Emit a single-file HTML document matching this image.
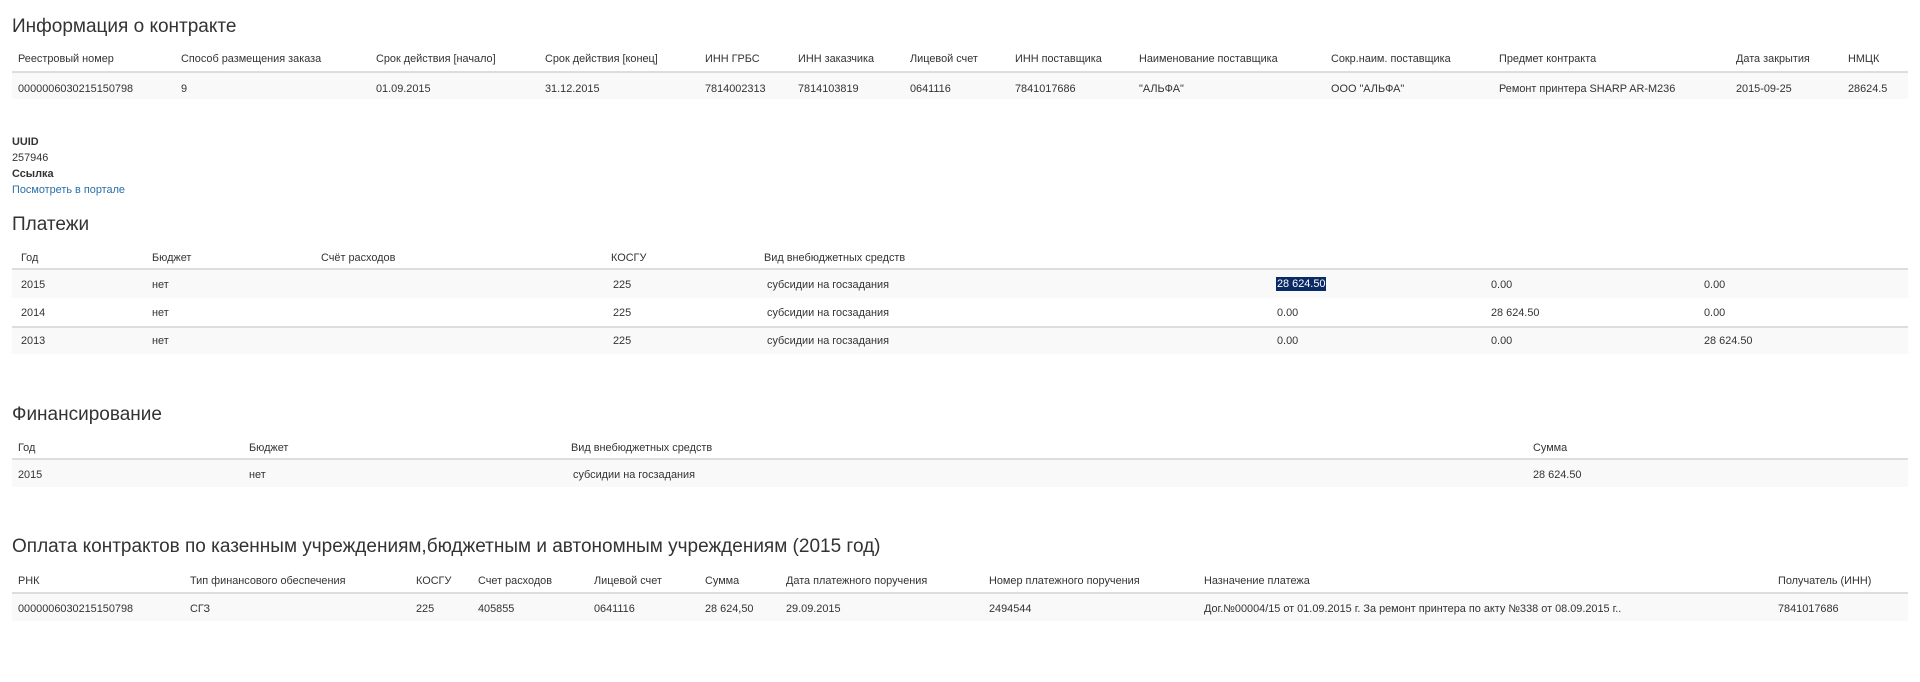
<!DOCTYPE html>
<html><head><meta charset="utf-8"><style>
body{margin:0;width:1920px;height:682px;background:#fff;font-family:"Liberation Sans",sans-serif;color:#333;font-size:10.9px;position:relative;overflow:hidden}
.a{position:absolute;white-space:nowrap;margin-top:2px}
h2{position:absolute;margin:0;font-weight:normal;font-size:19px;left:12px;color:#333;white-space:nowrap;margin-top:2px}
.bg{position:absolute;left:12px;width:1896px;background:#f9f9f9}
.ln{position:absolute;left:12px;width:1896px;height:2px;background:#ddd}
.sel{background:#0a2a66;color:#fff;padding:1px 1px}
b{font-weight:bold}
a{color:#2a6fa8;text-decoration:none}
</style></head><body>
<h2 style="top:14px">Информация о контракте</h2>
<div class="ln" style="top:71px"></div>
<div class="bg" style="top:73px;height:26px"></div>
<div class="a" style="top:51px;left:18px">Реестровый номер</div>
<div class="a" style="top:51px;left:181px">Способ размещения заказа</div>
<div class="a" style="top:51px;left:376px">Срок действия [начало]</div>
<div class="a" style="top:51px;left:545px">Срок действия [конец]</div>
<div class="a" style="top:51px;left:705px">ИНН ГРБС</div>
<div class="a" style="top:51px;left:798px">ИНН заказчика</div>
<div class="a" style="top:51px;left:910px">Лицевой счет</div>
<div class="a" style="top:51px;left:1015px">ИНН поставщика</div>
<div class="a" style="top:51px;left:1139px">Наименование поставщика</div>
<div class="a" style="top:51px;left:1331px">Сокр.наим. поставщика</div>
<div class="a" style="top:51px;left:1499px">Предмет контракта</div>
<div class="a" style="top:51px;left:1736px">Дата закрытия</div>
<div class="a" style="top:51px;left:1848px">НМЦК</div>
<div class="a" style="top:81px;left:18px">0000006030215150798</div>
<div class="a" style="top:81px;left:181px">9</div>
<div class="a" style="top:81px;left:376px">01.09.2015</div>
<div class="a" style="top:81px;left:545px">31.12.2015</div>
<div class="a" style="top:81px;left:705px">7814002313</div>
<div class="a" style="top:81px;left:798px">7814103819</div>
<div class="a" style="top:81px;left:910px">0641116</div>
<div class="a" style="top:81px;left:1015px">7841017686</div>
<div class="a" style="top:81px;left:1139px">"АЛЬФА"</div>
<div class="a" style="top:81px;left:1331px">ООО "АЛЬФА"</div>
<div class="a" style="top:81px;left:1499px">Ремонт принтера SHARP AR-M236</div>
<div class="a" style="top:81px;left:1736px">2015-09-25</div>
<div class="a" style="top:81px;left:1848px">28624.5</div>

<div class="a" style="top:134px;left:12px"><b>UUID</b></div>
<div class="a" style="top:150px;left:12px">257946</div>
<div class="a" style="top:166px;left:12px"><b>Ссылка</b></div>
<div class="a" style="top:182px;left:12px"><a>Посмотреть в портале</a></div>

<h2 style="top:212px">Платежи</h2>
<div class="ln" style="top:268px"></div>
<div class="bg" style="top:270px;height:28px"></div>
<div class="ln" style="top:326px"></div>
<div class="bg" style="top:328px;height:26px"></div>
<div class="a" style="top:250px;left:21px">Год</div>
<div class="a" style="top:250px;left:152px">Бюджет</div>
<div class="a" style="top:250px;left:321px">Счёт расходов</div>
<div class="a" style="top:250px;left:611px">КОСГУ</div>
<div class="a" style="top:250px;left:764px">Вид внебюджетных средств</div>
<div class="a" style="top:277px;left:21px">2015</div><div class="a" style="top:277px;left:152px">нет</div><div class="a" style="top:277px;left:613px">225</div><div class="a" style="top:277px;left:767px">субсидии на госзадания</div><div class="a" style="top:276px;left:1276px"><span class="sel">28 624.50</span></div><div class="a" style="top:277px;left:1491px">0.00</div><div class="a" style="top:277px;left:1704px">0.00</div>
<div class="a" style="top:305px;left:21px">2014</div><div class="a" style="top:305px;left:152px">нет</div><div class="a" style="top:305px;left:613px">225</div><div class="a" style="top:305px;left:767px">субсидии на госзадания</div><div class="a" style="top:305px;left:1277px">0.00</div><div class="a" style="top:305px;left:1491px">28 624.50</div><div class="a" style="top:305px;left:1704px">0.00</div>
<div class="a" style="top:333px;left:21px">2013</div><div class="a" style="top:333px;left:152px">нет</div><div class="a" style="top:333px;left:613px">225</div><div class="a" style="top:333px;left:767px">субсидии на госзадания</div><div class="a" style="top:333px;left:1277px">0.00</div><div class="a" style="top:333px;left:1491px">0.00</div><div class="a" style="top:333px;left:1704px">28 624.50</div>

<h2 style="top:402px">Финансирование</h2>
<div class="ln" style="top:458px"></div>
<div class="bg" style="top:460px;height:27px"></div>
<div class="a" style="top:440px;left:18px">Год</div>
<div class="a" style="top:440px;left:249px">Бюджет</div>
<div class="a" style="top:440px;left:571px">Вид внебюджетных средств</div>
<div class="a" style="top:440px;left:1533px">Сумма</div>
<div class="a" style="top:467px;left:18px">2015</div>
<div class="a" style="top:467px;left:249px">нет</div>
<div class="a" style="top:467px;left:573px">субсидии на госзадания</div>
<div class="a" style="top:467px;left:1533px">28 624.50</div>

<h2 style="top:534px">Оплата контрактов по казенным учреждениям,бюджетным и автономным учреждениям (2015 год)</h2>
<div class="ln" style="top:592px"></div>
<div class="bg" style="top:594px;height:27px"></div>
<div class="a" style="top:573px;left:18px">РНК</div>
<div class="a" style="top:573px;left:190px">Тип финансового обеспечения</div>
<div class="a" style="top:573px;left:416px">КОСГУ</div>
<div class="a" style="top:573px;left:478px">Счет расходов</div>
<div class="a" style="top:573px;left:594px">Лицевой счет</div>
<div class="a" style="top:573px;left:705px">Сумма</div>
<div class="a" style="top:573px;left:786px">Дата платежного поручения</div>
<div class="a" style="top:573px;left:989px">Номер платежного поручения</div>
<div class="a" style="top:573px;left:1204px">Назначение платежа</div>
<div class="a" style="top:573px;left:1778px">Получатель (ИНН)</div>
<div class="a" style="top:601px;left:18px">0000006030215150798</div>
<div class="a" style="top:601px;left:190px">СГЗ</div>
<div class="a" style="top:601px;left:416px">225</div>
<div class="a" style="top:601px;left:478px">405855</div>
<div class="a" style="top:601px;left:594px">0641116</div>
<div class="a" style="top:601px;left:705px">28 624,50</div>
<div class="a" style="top:601px;left:786px">29.09.2015</div>
<div class="a" style="top:601px;left:989px">2494544</div>
<div class="a" style="top:601px;left:1204px">Дог.№00004/15 от 01.09.2015 г. За ремонт принтера по акту №338 от 08.09.2015 г..</div>
<div class="a" style="top:601px;left:1778px">7841017686</div>
</body></html>
